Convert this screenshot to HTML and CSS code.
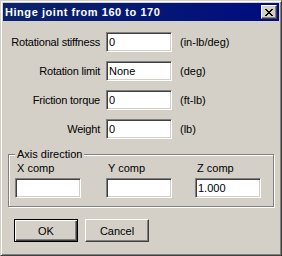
FILE: index.html
```html
<!DOCTYPE html>
<html lang="en">
<head>
  <meta charset="UTF-8" />
  <title>Hinge joint from 160 to 170</title>
  <link rel="stylesheet" href="styles.css">
</head>
<body>

<!-- Dialog window -->
<div class="window">
  <div class="title-bar">
    <span class="title-text">Hinge joint from 160 to 170</span>
    <button class="close-btn" aria-label="Close">
      <svg width="8" height="7" viewBox="0 0 8 7">
        <path d="M0 0h2v1h1v1h2v-1h1v-1h2v1h-1v1h-1v1h-1v1h1v1h1v1h1v1h-2v-1h-1v-1h-2v1h-1v1h-2v-1h1v-1h1v-1h1v-1h-1v-1h-1v-1h-1z" fill="#000"/>
      </svg>
    </button>
  </div>

  <div class="client">
    <!-- Joint properties -->
    <div class="form-grid">
      <label class="field-label">Rotational stiffness</label>
      <input class="text-box" type="text" value="0">
      <span class="unit">(in-lb/deg)</span>

      <label class="field-label">Rotation limit</label>
      <input class="text-box" type="text" value="None">
      <span class="unit">(deg)</span>

      <label class="field-label">Friction torque</label>
      <input class="text-box" type="text" value="0">
      <span class="unit">(ft-lb)</span>

      <label class="field-label">Weight</label>
      <input class="text-box" type="text" value="0">
      <span class="unit">(lb)</span>
    </div>

    <!-- Axis -->
    <fieldset class="group-box">
      <legend class="group-title">Axis direction</legend>
      <div class="axis-grid">
        <div class="axis-col">
          <span class="axis-label">X comp</span>
          <input class="text-box" type="text" value="">
        </div>
        <div class="axis-col">
          <span class="axis-label">Y comp</span>
          <input class="text-box" type="text" value="">
        </div>
        <div class="axis-col">
          <span class="axis-label">Z comp</span>
          <input class="text-box" type="text" value="1.000">
        </div>
      </div>
    </fieldset>

    <div class="button-row">
      <button class="push-btn default-btn">OK</button>
      <button class="push-btn">Cancel</button>
    </div>
  </div>
</div>

</body>
</html>
```

FILE: styles.css
```css
/* General */
body {
  margin: 0;
  font-family: "Liberation Sans", Arial, sans-serif;
  font-size: 11px;
  color: #000000;
  background-color: #d4d0c8;
}

/* Window frame */
.window {
  width: 282px;
  height: 256px;
  box-sizing: border-box;
  background-color: #d4d0c8;
  border: 1px solid;
  border-color: #d4d0c8 #404040 #404040 #d4d0c8;
  box-shadow: inset 1px 1px 0 #ffffff, inset -1px -1px 0 #808080;
  padding: 2px;
}

.title-bar {
  height: 18px;
  display: flex;
  align-items: center;
  justify-content: space-between;
  padding: 0 2px 0 2px;
  background: linear-gradient(to right, #0a246a, #000c80);
}

.title-text {
  color: #ffffff;
  font-weight: bold;
  font-size: 11px;
  letter-spacing: 0.55px;
}

.close-btn {
  width: 16px;
  height: 14px;
  padding: 0;
  display: flex;
  align-items: center;
  justify-content: center;
  background-color: #d4d0c8;
  border: 1px solid;
  border-color: #ffffff #404040 #404040 #ffffff;
  box-shadow: inset -1px -1px 0 #808080;
}

/* Client area */
.client {
  margin-top: 1px;
}

.form-grid {
  display: grid;
  grid-template-columns: 97px 66px auto;
  column-gap: 6px;
  row-gap: 9px;
  align-items: center;
  padding: 10px 0 0 0;
}

.field-label {
  text-align: right;
  white-space: nowrap;
  letter-spacing: -0.2px;
}

.unit {
  padding-left: 2px;
}

.text-box {
  width: 66px;
  height: 20px;
  box-sizing: border-box;
  margin: 0;
  padding: 0 2px;
  font-family: "Liberation Sans", Arial, sans-serif;
  font-size: 11px;
  color: #000000;
  background-color: #ffffff;
  border: 1px solid;
  border-color: #808080 #ffffff #ffffff #808080;
  box-shadow: inset 1px 1px 0 #404040, inset -1px -1px 0 #d4d0c8;
  outline: none;
}

/* Group box */
.group-box {
  width: 266px;
  height: 59px;
  box-sizing: border-box;
  margin: 9px 0 0 5px;
  padding: 0 0 0 6px;
  border: 1px solid #808080;
  box-shadow: inset 1px 1px 0 #ffffff, 1px 1px 0 #ffffff;
}

.group-title {
  padding: 0 2px;
  margin-left: 0;
  background-color: #d4d0c8;
  line-height: 13px;
}

.axis-grid {
  display: grid;
  grid-template-columns: 91px 89px 66px;
  margin-top: 1px;
}

.axis-col {
  display: flex;
  flex-direction: column;
  gap: 3px;
}

.axis-label {
  padding-left: 2px;
  line-height: 13px;
}

/* Buttons */
.button-row {
  display: flex;
  gap: 7px;
  padding: 12px 0 0 11px;
}

.push-btn {
  width: 64px;
  height: 23px;
  padding: 0;
  font-family: "Liberation Sans", Arial, sans-serif;
  font-size: 11px;
  color: #000000;
  background-color: #d4d0c8;
  border: 1px solid;
  border-color: #ffffff #404040 #404040 #ffffff;
  box-shadow: inset -1px -1px 0 #808080;
}

.default-btn {
  border: 1px solid #000000;
  box-shadow: inset 1px 1px 0 #ffffff, inset -1px -1px 0 #404040, inset -2px -2px 0 #808080;
}
```
